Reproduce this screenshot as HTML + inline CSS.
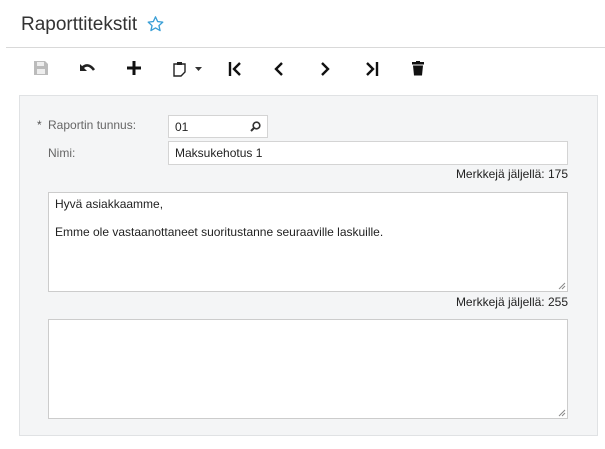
<!DOCTYPE html>
<html><head><meta charset="utf-8">
<style>
*{box-sizing:border-box;margin:0;padding:0}
body{width:605px;height:449px;background:#fff;font-family:"Liberation Sans",Arial,sans-serif;position:relative;overflow:hidden;color:#222}
.abs{position:absolute}
.title{left:21px;top:14px;font-size:19px;color:#333}
.hline{left:6px;top:47px;width:599px;height:1px;background:#d9d9d9}
.panel{left:19px;top:95px;width:579px;height:341px;background:#f4f5f6;border:1px solid #e0e2e4}
.lbl{font-size:12px;color:#666}
.inp{background:#fff;border:1px solid #d4d4d4;font-size:12px;color:#222;padding:4px 0 0 6px}
.cnt{font-size:12px;color:#222;text-align:right}
.ta{background:#fff;border:1px solid #ccc;font-size:12px;padding:4px 6px;line-height:14px}
svg{position:absolute}
</style></head><body>
<div class="abs title">Raporttitekstit</div>
<svg style="left:146px;top:15px" width="19" height="18" viewBox="0 0 24 24"><path d="M12 2.5l2.9 6.3 6.8.7-5.1 4.6 1.5 6.7L12 17.3l-6.1 3.5 1.5-6.7-5.1-4.6 6.8-.7z" fill="none" stroke="#3b9fd6" stroke-width="1.8" stroke-linejoin="round"/></svg>
<div class="abs hline"></div>
<svg style="left:34px;top:61px" width="14" height="14" viewBox="0 0 14 14"><path d="M0 0h11l3 3v11H0z" fill="#bbb"/><rect x="3" y="1" width="7" height="4" fill="#eee"/><rect x="3" y="8" width="8" height="5" fill="#eee"/></svg>
<svg style="left:80px;top:62px" width="16" height="12" viewBox="0 0 16 12"><path d="M2 6Q8 0 14 8" fill="none" stroke="#222" stroke-width="2.6"/><path d="M0 2v7h7z" fill="#222"/></svg>
<svg style="left:127px;top:61px" width="14" height="14" viewBox="0 0 14 14"><path d="M7 0v14M0 7h14" stroke="#111" stroke-width="3"/></svg>
<svg style="left:173px;top:61px" width="14" height="16" viewBox="0 0 14 16"><path d="M1 3h11v8l-4 4H1z" fill="none" stroke="#222" stroke-width="1.4"/><rect x="4" y="1" width="5" height="3" fill="#222"/></svg>
<svg style="left:195px;top:67px" width="7" height="4" viewBox="0 0 7 4"><path d="M0 0h7L3.5 4z" fill="#333"/></svg>
<svg style="left:228px;top:62px" width="14" height="14" viewBox="0 0 14 14"><path d="M2 0v14" stroke="#111" stroke-width="2.4"/><path d="M12 1L6 7l6 6" fill="none" stroke="#111" stroke-width="2.4"/></svg>
<svg style="left:274px;top:62px" width="10" height="14" viewBox="0 0 10 14"><path d="M8 1L2 7l6 6" fill="none" stroke="#111" stroke-width="2.4"/></svg>
<svg style="left:320px;top:62px" width="10" height="14" viewBox="0 0 10 14"><path d="M2 1l6 6-6 6" fill="none" stroke="#111" stroke-width="2.4"/></svg>
<svg style="left:365px;top:62px" width="14" height="14" viewBox="0 0 14 14"><path d="M12 0v14" stroke="#111" stroke-width="2.4"/><path d="M2 1l6 6-6 6" fill="none" stroke="#111" stroke-width="2.4"/></svg>
<svg style="left:412px;top:61px" width="12" height="15" viewBox="0 0 12 15"><rect x="0" y="1" width="12" height="2.5" fill="#111"/><rect x="4" y="0" width="4" height="2" fill="#111"/><path d="M1 4.5h10l-1 10H2z" fill="#111"/></svg>
<div class="abs panel"></div>
<div class="abs lbl" style="left:37px;top:118px;color:#555">*</div>
<div class="abs lbl" style="left:48px;top:118px">Raportin tunnus:</div>
<div class="abs inp" style="left:168px;top:115px;width:100px;height:23px">01</div>
<svg style="left:250px;top:121px" width="11" height="11" viewBox="0 0 11 11"><circle cx="6.5" cy="4.5" r="3.3" fill="none" stroke="#333" stroke-width="1.6"/><path d="M4 7L1 10" stroke="#333" stroke-width="2"/></svg>
<div class="abs lbl" style="left:48px;top:146px">Nimi:</div>
<div class="abs inp" style="left:168px;top:141px;width:400px;height:24px">Maksukehotus 1</div>
<div class="abs cnt" style="left:400px;top:167px;width:168px">Merkkejä jäljellä: 175</div>
<div class="abs ta" style="left:48px;top:192px;width:520px;height:100px">Hyvä asiakkaamme,<br><br>Emme ole vastaanottaneet suoritustanne seuraaville laskuille.</div>
<svg style="left:558px;top:282px" width="8" height="8" viewBox="0 0 8 8"><path d="M1 7L7 1M4 7L7 4" stroke="#888" stroke-width="1"/></svg>
<div class="abs cnt" style="left:400px;top:295px;width:168px">Merkkejä jäljellä: 255</div>
<div class="abs ta" style="left:48px;top:319px;width:520px;height:100px"></div>
<svg style="left:558px;top:409px" width="8" height="8" viewBox="0 0 8 8"><path d="M1 7L7 1M4 7L7 4" stroke="#888" stroke-width="1"/></svg>
</body></html>
